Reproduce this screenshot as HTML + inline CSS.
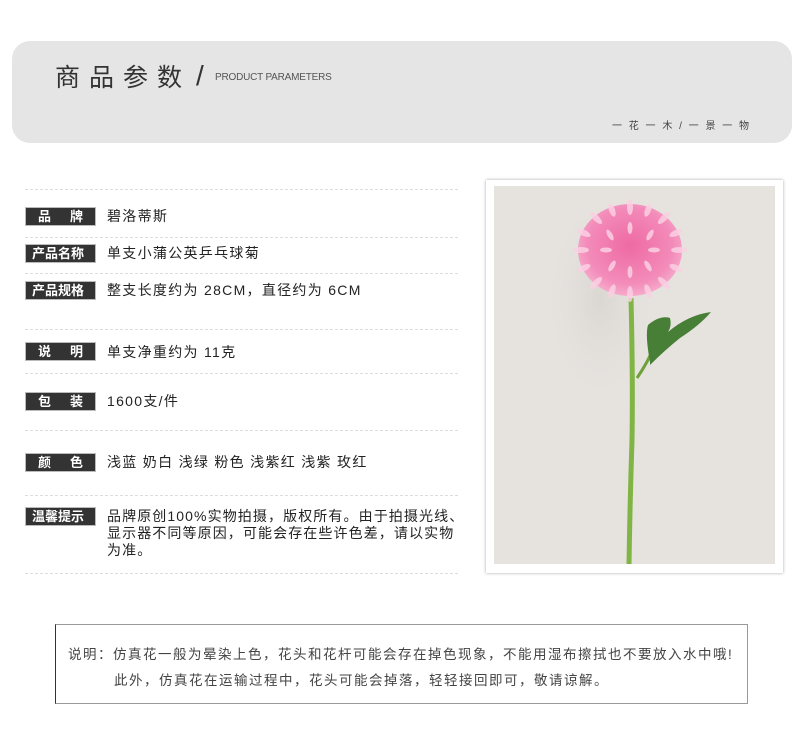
<!DOCTYPE html>
<html><head><meta charset="utf-8"><style>
*{margin:0;padding:0;box-sizing:border-box}
body{width:800px;height:737px;background:#fff;position:relative;overflow:hidden;font-family:"Liberation Sans","Noto Sans CJK SC",sans-serif;color:#333}
.hdr{position:absolute;left:12px;top:41px;width:780px;height:102px;background:#e5e5e5;border-radius:18px}
.t1{position:absolute;left:55px;top:58px;font-size:25px;letter-spacing:9px;color:#333}
.sl{position:absolute;left:196px;top:60px;font-size:28px;color:#333;font-weight:300}
.t2{position:absolute;left:215px;top:72px;font-size:10px;color:#555;letter-spacing:-0.2px}
.t3{position:absolute;left:612px;top:117px;font-size:10px;color:#444;letter-spacing:2px}
.dl{position:absolute;left:25px;width:433px;border-top:1px dashed #ddd}
.lb{position:absolute;left:25px;width:71px;height:19px;background:#333;border:1px solid #bbb;color:#fff;font-weight:bold;font-size:13px;line-height:17px;display:flex;justify-content:space-between;padding:0 6px}
.lb.s{padding:0 12px}
.v{position:absolute;left:107px;font-size:14px;color:#222;line-height:17px;white-space:nowrap;letter-spacing:1.3px}
.frame{position:absolute;left:486px;top:180px;width:297px;height:393px;background:#fff;box-shadow:0 0 3px rgba(0,0,0,.35)}
.note{position:absolute;left:55px;top:624px;width:693px;height:80px;border:1px solid #999;border-left:1px solid #333;font-size:13.5px;color:#444;letter-spacing:1.5px;white-space:nowrap}
</style></head><body>
<div class="hdr"></div>
<div class="t1">商品参数</div>
<div class="sl">/</div>
<div class="t2">PRODUCT PARAMETERS</div>
<div class="t3">一 花 一 木 / 一 景 一 物</div>

<div class="dl" style="top:189px"></div>
<div class="lb s" style="top:207px"><span>品</span><span>牌</span></div>
<div class="v" style="top:208px">碧洛蒂斯</div>
<div class="dl" style="top:237px"></div>
<div class="lb" style="top:244px"><span>产品名称</span></div>
<div class="v" style="top:245px">单支小蒲公英乒乓球菊</div>
<div class="dl" style="top:273px"></div>
<div class="lb" style="top:281px"><span>产品规格</span></div>
<div class="v" style="top:282px">整支长度约为 28CM，直径约为 6CM</div>
<div class="dl" style="top:329px"></div>
<div class="lb s" style="top:342px"><span>说</span><span>明</span></div>
<div class="v" style="top:344px">单支净重约为 11克</div>
<div class="dl" style="top:373px"></div>
<div class="lb s" style="top:392px"><span>包</span><span>装</span></div>
<div class="v" style="top:393px">1600支/件</div>
<div class="dl" style="top:430px"></div>
<div class="lb s" style="top:453px"><span>颜</span><span>色</span></div>
<div class="v" style="top:454px">浅蓝 奶白 浅绿 粉色 浅紫红 浅紫 玫红</div>
<div class="dl" style="top:495px"></div>
<div class="lb" style="top:507px"><span>温馨提示</span></div>
<div class="v" style="top:508px;letter-spacing:1.1px">品牌原创100%实物拍摄，版权所有。由于拍摄光线、<br>显示器不同等原因，可能会存在些许色差，请以实物<br>为准。</div>
<div class="dl" style="top:573px"></div>

<div class="frame"></div>
<svg style="position:absolute;left:0;top:0" width="800" height="737">
<defs>
<radialGradient id="fl" cx="0.5" cy="0.45" r="0.55"><stop offset="0" stop-color="#ee6aa2"/><stop offset="0.75" stop-color="#f38bb9"/><stop offset="1" stop-color="#f6aacb"/></radialGradient>
<radialGradient id="sh" cx="0.5" cy="0.5" r="0.5"><stop offset="0" stop-color="#d2ceca"/><stop offset="1" stop-color="#e5e2de" stop-opacity="0"/></radialGradient>
</defs>
<rect x="494" y="186" width="281" height="378" fill="#e6e3df"/>
<ellipse cx="600" cy="300" rx="60" ry="110" fill="url(#sh)" opacity="0.6"/>
<path d="M631 298 Q633 380 632 440 Q630 500 629 564" stroke="#80b545" stroke-width="5" fill="none"/>
<path d="M637 378 Q648 362 655 345" stroke="#6ea03c" stroke-width="3" fill="none"/>
<path d="M650 362 Q645 335 648 325 Q660 315 670 318 Q672 326 668 332 Q688 315 711 312 Q700 325 680 338 Q665 350 650 365Z" fill="#477f36"/>
<ellipse cx="630" cy="250" rx="52" ry="46" fill="url(#fl)"/>
<g fill="#fbd0e3" opacity="0.85">
<ellipse cx="630" cy="207" rx="3" ry="8"/><ellipse cx="630" cy="294" rx="3" ry="8"/>
<ellipse cx="581" cy="250" rx="8" ry="3"/><ellipse cx="679" cy="250" rx="8" ry="3"/>
<ellipse cx="596" cy="218" rx="3" ry="8" transform="rotate(-45 596 218)"/><ellipse cx="664" cy="218" rx="3" ry="8" transform="rotate(45 664 218)"/>
<ellipse cx="596" cy="283" rx="3" ry="8" transform="rotate(45 596 283)"/><ellipse cx="664" cy="283" rx="3" ry="8" transform="rotate(-45 664 283)"/>
<ellipse cx="612" cy="210" rx="3" ry="7" transform="rotate(-20 612 210)"/><ellipse cx="648" cy="210" rx="3" ry="7" transform="rotate(20 648 210)"/>
<ellipse cx="612" cy="291" rx="3" ry="7" transform="rotate(20 612 291)"/><ellipse cx="648" cy="291" rx="3" ry="7" transform="rotate(-20 648 291)"/>
<ellipse cx="584" cy="233" rx="3" ry="7" transform="rotate(-65 584 233)"/><ellipse cx="676" cy="233" rx="3" ry="7" transform="rotate(65 676 233)"/>
<ellipse cx="584" cy="268" rx="3" ry="7" transform="rotate(65 584 268)"/><ellipse cx="676" cy="268" rx="3" ry="7" transform="rotate(-65 676 268)"/>
<ellipse cx="610" cy="235" rx="2.5" ry="6" transform="rotate(-30 610 235)"/><ellipse cx="650" cy="235" rx="2.5" ry="6" transform="rotate(30 650 235)"/>
<ellipse cx="612" cy="266" rx="2.5" ry="6" transform="rotate(30 612 266)"/><ellipse cx="648" cy="266" rx="2.5" ry="6" transform="rotate(-30 648 266)"/>
<ellipse cx="630" cy="228" rx="2.5" ry="6"/><ellipse cx="630" cy="272" rx="2.5" ry="6"/>
<ellipse cx="606" cy="250" rx="6" ry="2.5"/><ellipse cx="654" cy="250" rx="6" ry="2.5"/>
</g>
</svg>

<div class="note">
<div style="position:absolute;left:12px;top:18px">说明：仿真花一般为晕染上色，花头和花杆可能会存在掉色现象，不能用湿布擦拭也不要放入水中哦!</div>
<div style="position:absolute;left:58px;top:44px">此外，仿真花在运输过程中，花头可能会掉落，轻轻接回即可，敬请谅解。</div>
</div>
</body></html>
